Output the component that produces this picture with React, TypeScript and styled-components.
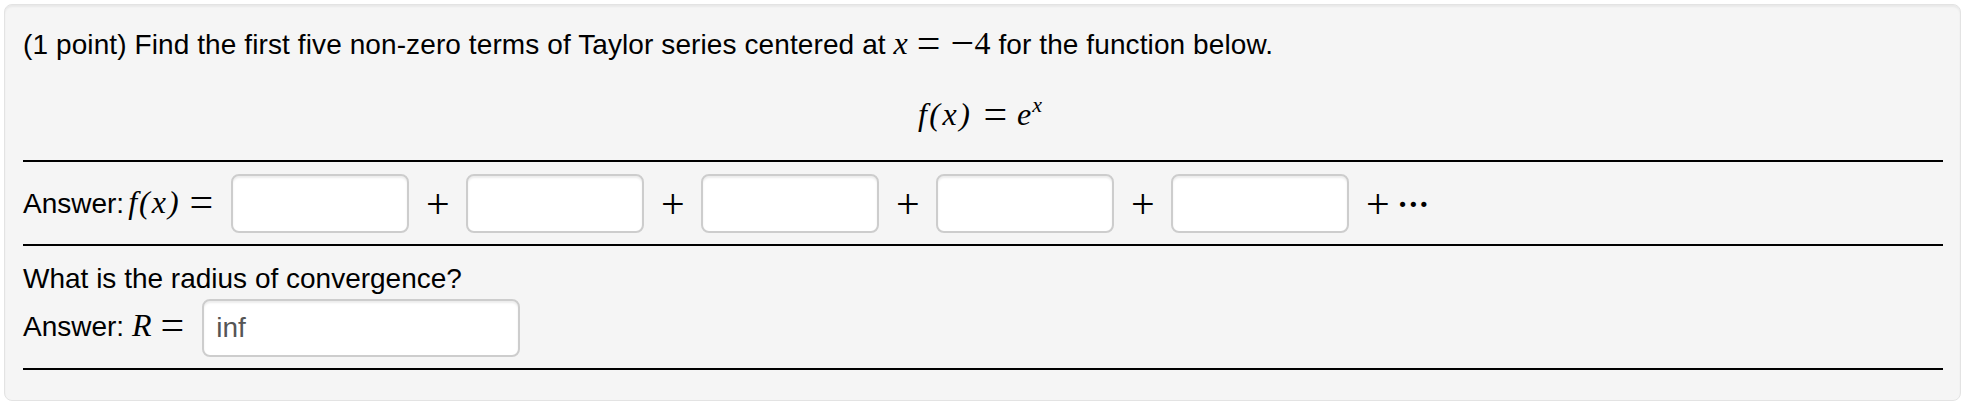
import React from "react";
import styled, { createGlobalStyle } from "styled-components";

const GlobalStyle = createGlobalStyle`
  html, body {
    margin: 0;
    padding: 0;
    background: #ffffff;
  }
  body {
    font-family: "Liberation Sans", Arial, Helvetica, sans-serif;
    color: #000;
  }
`;

const Page = styled.div`
  padding: 4px 0 0 4px;
`;

const Well = styled.section`
  box-sizing: border-box;
  width: 1957px;
  padding: 20px 17px 30px 18px;
  background: #f5f5f5;
  border: 1px solid #e3e3e3;
  border-radius: 8px;
  box-shadow: inset 0 2px 2px rgba(0, 0, 0, 0.05);
`;

const Text = styled.p`
  margin: 0;
  font-size: 28px;
  line-height: 40px;
  white-space: nowrap;
`;

const Title = styled(Text)`
  letter-spacing: 0.1px;
`;

const Question = styled(Text)`
  margin-top: 15px;
  line-height: 36px;
`;

const Display = styled.div`
  margin-top: 29px;
  text-align: center;
  font-family: "Liberation Serif", "Times New Roman", serif;
  font-size: 32px;
  line-height: 40px;
  padding-right: 6px;
`;

const MathVar = styled.i<{ $spacing?: number; $ml?: number }>`
  font-family: "Liberation Serif", "Times New Roman", serif;
  font-size: 32px;
  font-style: italic;
  line-height: 0;
  margin-left: ${(p) => p.$ml ?? 0}px;
  letter-spacing: ${(p) => p.$spacing ?? 0}px;
`;

const MathNum = styled.span`
  font-family: "Liberation Serif", "Times New Roman", serif;
  font-size: 32px;
  line-height: 0;
`;

const Op = styled.span<{ $ml?: number; $mr?: number }>`
  font-family: "Liberation Serif", "Times New Roman", serif;
  font-size: 42px;
  line-height: 0;
  vertical-align: -3px;
  margin-left: ${(p) => p.$ml ?? 0}px;
  margin-right: ${(p) => p.$mr ?? 0}px;
`;

const Sup = styled.sup`
  font-family: "Liberation Serif", "Times New Roman", serif;
  font-style: italic;
  font-size: 22px;
  line-height: 0;
  vertical-align: 13px;
  margin-left: 1px;
`;

const Rule = styled.hr<{ $mt?: number }>`
  margin: ${(p) => p.$mt ?? 0}px 0 0 0;
  border: 0;
  height: 2px;
  background: #000;
`;

const AnswerRow = styled.div<{ $align: "center" | "flex-start"; $pad: string }>`
  display: flex;
  align-items: ${(p) => p.$align};
  gap: 18px;
  padding: ${(p) => p.$pad};
`;

const Label = styled.span<{ $mt?: number }>`
  margin-top: ${(p) => p.$mt ?? 0}px;
  font-size: 28px;
  line-height: 40px;
  white-space: nowrap;
`;

const Field = styled.input<{ $w: number; $h: number }>`
  box-sizing: border-box;
  width: ${(p) => p.$w}px;
  height: ${(p) => p.$h}px;
  margin: 0;
  padding: 0 12px;
  background: #fff;
  border: 2px solid #cdcdcd;
  border-radius: 8px;
  box-shadow: inset 0 2px 2px rgba(0, 0, 0, 0.075);
  font-family: "Liberation Sans", Arial, Helvetica, sans-serif;
  font-size: 28px;
  color: #555;
  outline: none;
`;

const Plus = styled.span`
  display: inline-flex;
  align-items: center;
  justify-content: center;
  width: 21px;
  height: 40px;
  font-family: "Liberation Serif", "Times New Roman", serif;
  font-size: 42px;
`;

const Tail = styled.span`
  display: inline-flex;
  align-items: center;
  gap: 9px;
`;

const Dots = styled.span`
  font-family: "Liberation Serif", "Times New Roman", serif;
  font-size: 32px;
  font-weight: bold;
  line-height: 40px;
`;

const TERMS = [0, 1, 2, 3, 4];

export default function App() {
  return (
    <>
      <GlobalStyle />
      <Page>
        <Well>
          <Title>
            (1 point) Find the first five non-zero terms of Taylor series centered at{" "}
            <MathVar>x</MathVar>
            <Op $ml={9} $mr={10}>=</Op>
            <Op>−</Op>
            <MathNum>4</MathNum> for the function below.
          </Title>
          <Display>
            <MathVar $spacing={2.5}>f(x)</MathVar>
            <Op $ml={11} $mr={10}>=</Op>
            <MathVar>e</MathVar>
            <Sup>x</Sup>
          </Display>
          <Rule $mt={26} />
          <AnswerRow $align="center" $pad="12px 0 11px 0">
            <Label>
              Answer:<MathVar $ml={4} $spacing={2}>f(x)</MathVar>
              <Op $ml={9}>=</Op>
            </Label>
            {TERMS.map((i) => (
              <React.Fragment key={i}>
                <Field $w={178} $h={59} aria-label={`term ${i + 1}`} />
                {i < TERMS.length - 1 ? (
                  <Plus>+</Plus>
                ) : (
                  <Tail>
                    <Plus>+</Plus>
                    <Dots>···</Dots>
                  </Tail>
                )}
              </React.Fragment>
            ))}
          </AnswerRow>
          <Rule />
          <Question>What is the radius of convergence?</Question>
          <AnswerRow $align="flex-start" $pad="2px 0 11px 0">
            <Label $mt={8}>
              Answer: <MathVar>R</MathVar>
              <Op $ml={9}>=</Op>
            </Label>
            <Field $w={318} $h={58} defaultValue="inf" aria-label="radius" />
          </AnswerRow>
          <Rule />
        </Well>
      </Page>
    </>
  );
}
